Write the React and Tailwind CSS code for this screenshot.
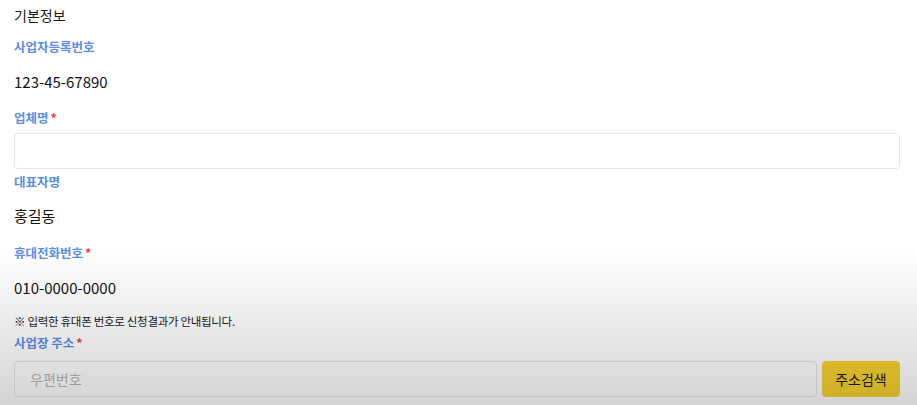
export default function App() {
  const font = { fontFamily: '"Noto Sans CJK KR", "Noto Sans", sans-serif' };
  return (
    <div className="relative h-[405px] w-[917px] overflow-hidden bg-white text-[#111]" style={font}>
      <div className="flex flex-col px-[14px]">
        <div className="mt-[4px] text-[14px] leading-[22px] text-[#1a1a1a]">기본정보</div>
        <div className="mt-[12px] text-[12.5px] font-bold leading-[18px] text-[#5a8ee6]">사업자등록번호</div>
        <div className="mt-[15px] text-[15px] leading-[22px]">123-45-67890</div>
        <div className="mt-[16px] text-[12.5px] font-bold leading-[18px] text-[#5a8ee6]">
          업체명<span className="ml-[2px] text-[#e64545]">*</span>
        </div>
        <input className="mt-[6px] h-[36px] w-[886px] rounded-[4px] border border-[#e6e6e6] bg-white px-4 outline-none" />
        <div className="mt-[4px] text-[12.5px] font-bold leading-[18px] text-[#5a8ee6]">대표자명</div>
        <div className="mt-[14px] text-[15px] leading-[22px]">홍길동</div>
        <div className="mt-[17px] text-[12.5px] font-bold leading-[18px] text-[#5a8ee6]">
          휴대전화번호<span className="ml-[2px] text-[#e64545]">*</span>
        </div>
        <div className="mt-[15px] text-[15px] leading-[22px]">010-0000-0000</div>
        <div className="mt-[13px] text-[11.5px] leading-[18px] tracking-[-0.3px] text-[#1a1a1a]">※ 입력한 휴대폰 번호로 신청결과가 안내됩니다.</div>
        <div className="mt-[4px] text-[12.5px] font-bold leading-[18px] text-[#5a8ee6]">
          사업장 주소<span className="ml-[2px] text-[#e64545]">*</span>
        </div>
        <div className="mt-[9px] flex w-[886px] gap-[5px]">
          <input
            placeholder="우편번호"
            className="h-[36px] flex-1 rounded-[4px] border border-[#e6e6e6] bg-white px-[15px] text-[14px] outline-none placeholder:text-[#b8b8b8]"
            style={font}
          />
          <button className="h-[36px] w-[78px] rounded-[4px] bg-[#f7d22f] text-[14px] text-[#1a1a1a]" style={font}>
            주소검색
          </button>
        </div>
      </div>
      <div className="pointer-events-none absolute inset-x-0 top-[250px] bottom-0 bg-gradient-to-b from-transparent to-black/[0.17]" />
    </div>
  );
}
